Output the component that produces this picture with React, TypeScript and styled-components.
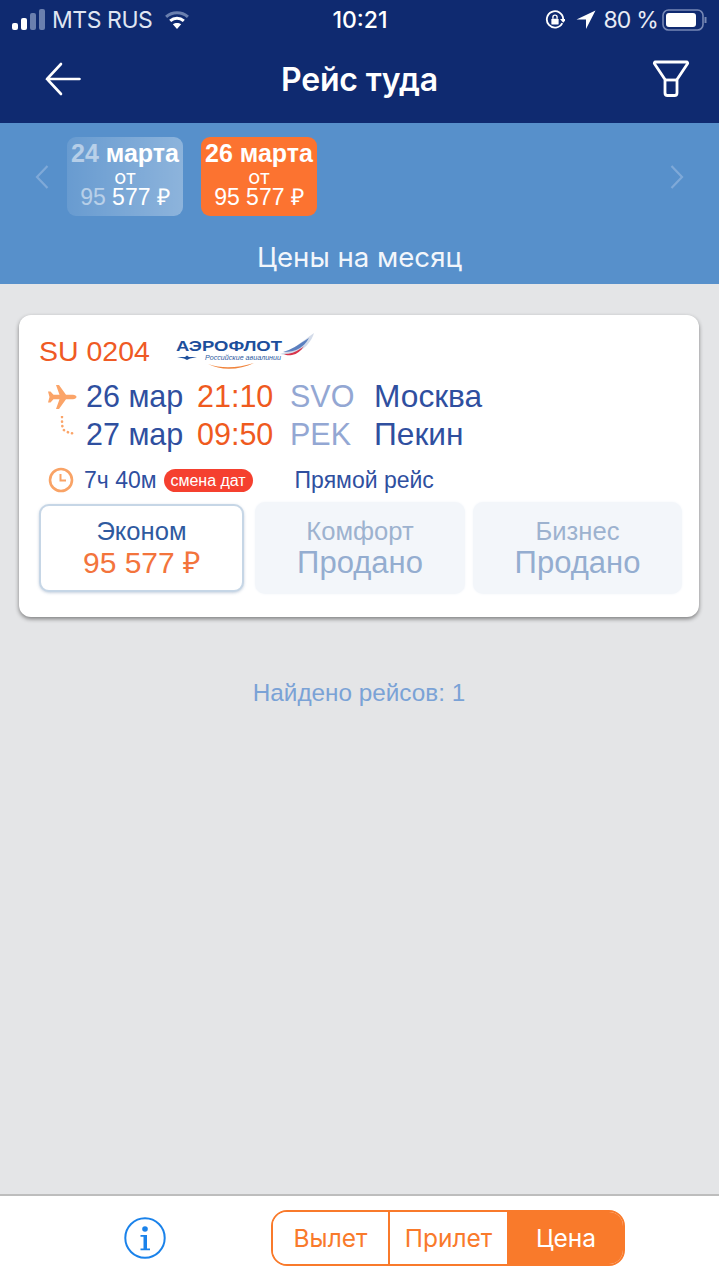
import styled, { createGlobalStyle } from 'styled-components';

const GlobalStyle = createGlobalStyle`
  html, body { margin: 0; padding: 0; background: #e4e5e7; }
  * { box-sizing: border-box; }
  body { font-family: 'Liberation Sans', Arial, sans-serif; }
`;

const Page = styled.div`
  display: flex;
  flex-direction: column;
  width: 719px;
  height: 1280px;
  overflow: hidden;
`;

const TopArea = styled.header`
  height: 123px;
  background: #0f2a70;
  color: #fff;
`;

const StatusBar = styled.div`
  display: grid;
  grid-template-columns: 1fr auto 1fr;
  align-items: center;
  height: 39px;
  padding: 0 11px 0 12px;
  font-family: Inter, sans-serif;
  font-size: 23px;
`;

const StatusLeft = styled.div`
  display: flex;
  align-items: center;
  gap: 6px;
  color: #dfe5f2;
  font-size: 23px;
  letter-spacing: -0.45px;
  & > svg:last-child {
    margin-left: 6px;
  }
`;

const StatusTime = styled.div`
  font-weight: 500;
  font-size: 23px;
`;

const StatusRight = styled.div`
  display: flex;
  justify-content: flex-end;
  align-items: center;
  gap: 7px;
  color: #e8ecf5;
  font-size: 23px;
  letter-spacing: -0.8px;
  & > svg:first-child {
    margin-right: 4px;
  }
  & > span {
    margin-right: -3px;
  }
`;

const NavBar = styled.div`
  display: grid;
  grid-template-columns: 1fr auto 1fr;
  align-items: center;
  height: 84px;
  padding: 0 29px 4px;
  & > svg:first-child {
    margin-left: 16px;
  }
`;

const NavTitle = styled.h1`
  margin: 0;
  font-family: Inter, sans-serif;
  font-weight: 600;
  font-size: 32px;
  letter-spacing: -0.2px;
`;

const NavEnd = styled.div`
  display: flex;
  justify-content: flex-end;
`;

const DateBand = styled.section`
  display: flex;
  flex-direction: column;
  height: 161px;
  padding-top: 14px;
  background: #5790cb;
  color: #fff;
`;

const DateRow = styled.div`
  display: flex;
  align-items: center;
  gap: 18px;
  padding: 0 35px;
`;

const Chevron = styled.svg<{ $end?: boolean }>`
  flex: none;
  margin-left: ${(p) => (p.$end ? 'auto' : '0')};
`;

const DateChip = styled.div<{ $active?: boolean }>`
  display: flex;
  flex-direction: column;
  align-items: center;
  width: 116px;
  height: 79px;
  padding-top: 4px;
  border-radius: 9px;
  background: ${(p) =>
    p.$active
      ? '#fc7330'
      : 'linear-gradient(90deg, rgba(255,255,255,0.1), rgba(255,255,255,0.32))'};
`;

const ChipDate = styled.div`
  font-size: 25px;
  font-weight: 700;
  line-height: 24px;
  white-space: nowrap;
`;

const ChipSmall = styled.div`
  margin-top: 3px;
  font-family: Inter, sans-serif;
  font-size: 20px;
  line-height: 18px;
`;

const ChipPrice = styled.div`
  font-size: 23px;
  line-height: 22px;
  white-space: nowrap;
`;

const Faded = styled.span`
  opacity: 0.5;
`;

const MonthLink = styled.div`
  margin-top: 25px;
  text-align: center;
  font-family: Inter, sans-serif;
  font-size: 27.6px;
  line-height: 32px;
  color: #f2f6fb;
`;

const Content = styled.main`
  flex: 1;
  padding: 31px 20px 0 19px;
  background: #e4e5e7;
`;

const Card = styled.article`
  height: 302px;
  padding: 16px 16px 0 20px;
  border-radius: 12px;
  background: #fff;
  box-shadow: 0 2px 4px rgba(0, 0, 0, 0.45);
`;

const CardHead = styled.div`
  display: flex;
  align-items: center;
  gap: 25px;
  height: 40px;
`;

const FlightNo = styled.div`
  font-size: 28.5px;
  color: #ef5a24;
`;

const Route = styled.div`
  display: grid;
  grid-template-columns: 47px 111px 93px 84px 1fr;
  grid-auto-rows: 37.5px;
  align-items: center;
  margin-top: 7px;
`;

const RouteIcon = styled.div<{ $top?: boolean }>`
  display: flex;
  align-self: ${(p) => (p.$top ? 'start' : 'center')};
  padding-left: 8px;
`;

const DateText = styled.div`
  font-size: 30.5px;
  color: #2f4f9f;
  white-space: nowrap;
`;

const TimeText = styled.div`
  font-size: 30.5px;
  color: #ef5a1e;
`;

const CodeText = styled.div`
  font-size: 30.5px;
  color: #93a7d3;
`;

const CityText = styled.div`
  font-size: 31.7px;
  color: #2f4f9f;
`;

const InfoRow = styled.div`
  display: flex;
  align-items: center;
  height: 30px;
  margin-top: 12px;
  padding-left: 9px;
  font-size: 23px;
  color: #2f4f9f;
`;

const Duration = styled.span`
  margin-left: 10px;
  white-space: nowrap;
`;

const Badge = styled.span`
  margin-left: 7px;
  width: 89px;
  height: 23px;
  border-radius: 12px;
  background: #f5402f;
  color: #fff;
  font-size: 16px;
  line-height: 23px;
  text-align: center;
  white-space: nowrap;
`;

const Direct = styled.span`
  margin-left: 42px;
`;

const Fares = styled.div`
  display: flex;
  align-items: center;
  margin-top: 6.5px;
`;

const Fare = styled.div<{ $selected?: boolean; $w: number; $gap: number }>`
  display: flex;
  flex-direction: column;
  align-items: center;
  justify-content: center;
  width: ${(p) => p.$w}px;
  margin-left: ${(p) => p.$gap}px;
  height: ${(p) => (p.$selected ? '88px' : '92px')};
  padding-bottom: 1px;
  border-radius: 10px;
  border: ${(p) => (p.$selected ? '2px solid #c6d6e6' : 'none')};
  background: ${(p) => (p.$selected ? '#fff' : '#f3f6fa')};
  box-shadow: ${(p) =>
    p.$selected ? '0 1px 3px rgba(90,120,160,0.35)' : '0 0 3px #f3f6fa'};
`;

const FareName = styled.div<{ $selected?: boolean }>`
  font-size: 25.6px;
  line-height: 31px;
  color: ${(p) => (p.$selected ? '#2f5a9f' : '#9db2cf')};
`;

const FarePrice = styled.div<{ $selected?: boolean }>`
  font-size: ${(p) => (p.$selected ? '30px' : '31px')};
  line-height: 32px;
  white-space: nowrap;
  color: ${(p) => (p.$selected ? '#f3743c' : '#94add0')};
`;

const Found = styled.div`
  margin-top: 62px;
  text-align: center;
  font-size: 24.3px;
  line-height: 28px;
  color: #7aa2d6;
`;

const Footer = styled.footer`
  display: flex;
  align-items: center;
  height: 86px;
  padding: 0 0 0 124px;
  background: #fff;
  border-top: 2px solid #bdbdbd;
`;

const Segments = styled.div`
  display: flex;
  width: 354px;
  height: 56px;
  margin-left: 105px;
  border: 2px solid #f97a2b;
  border-radius: 16px;
  overflow: hidden;
`;

const Segment = styled.div<{ $active?: boolean; $w: number }>`
  display: flex;
  align-items: center;
  justify-content: center;
  width: ${(p) => p.$w}px;
  font-family: Inter, sans-serif;
  font-size: 24.5px;
  color: ${(p) => (p.$active ? '#fff' : '#f97a2b')};
  background: ${(p) => (p.$active ? '#f97a2b' : '#fff')};
  & + & {
    border-left: 2px solid #f97a2b;
  }
`;

const LogoBox = styled.svg`
  display: block;
`;

const SignalIcon = () => (
  <svg width="34" height="22" viewBox="0 0 34 22">
    <rect x="0" y="14" width="6" height="7" rx="2" fill="#fff" />
    <rect x="9" y="9" width="6" height="12" rx="2" fill="#fff" />
    <rect x="18" y="4" width="6" height="17" rx="2" fill="#6a7fae" />
    <rect x="27" y="0" width="6" height="21" rx="2" fill="#6a7fae" />
  </svg>
);

const WifiIcon = () => (
  <svg width="26" height="20" viewBox="0 0 28 22" fill="none">
    <path d="M2 7.500C9 1.500 19 1.500 26 7.500" stroke="#6a7fae" strokeWidth="3.400" />
    <path d="M6.500 12C11 8.200 17 8.200 21.500 12" stroke="#fff" strokeWidth="3.400" />
    <path d="M14 21l-4.600-5.200c2.600-2 6.600-2 9.200 0z" fill="#fff" />
  </svg>
);

const RotationLockIcon = () => (
  <svg width="20" height="20" viewBox="0 0 22 22" fill="none">
    <path d="M19 14.500A9 9 0 1 1 20 10" stroke="#fff" strokeWidth="2" />
    <path d="M16.500 10h7l-3.500 4z" fill="#fff" />
    <rect x="7" y="9.500" width="8" height="6.500" rx="1" fill="#fff" />
    <path d="M8.700 9.500V8a2.300 2.300 0 0 1 4.600 0v1.500" stroke="#fff" strokeWidth="1.500" />
  </svg>
);

const LocationIcon = () => (
  <svg width="20" height="20" viewBox="0 0 20 20">
    <path d="M19.500 0.500L0.500 9.500h9.500v9.500z" fill="#fff" />
  </svg>
);

const BatteryIcon = () => (
  <svg width="46" height="22" viewBox="0 0 46 22" fill="none">
    <rect x="1" y="1" width="40" height="20" rx="5.500" stroke="#7788b5" strokeWidth="1.600" />
    <rect x="4" y="4" width="30" height="14" rx="3" fill="#fff" />
    <path d="M43.500 8v6" stroke="#7788b5" strokeWidth="2" />
  </svg>
);

const BackIcon = () => (
  <svg width="36" height="34" viewBox="0 0 36 34" fill="none" stroke="#fff" strokeWidth="2.600" strokeLinecap="round">
    <path d="M34.500 17H2M16 2L2 17l14 15" />
  </svg>
);

const FilterIcon = () => (
  <svg width="38" height="38" viewBox="0 0 38 38" fill="none" stroke="#fff" strokeWidth="2.800" strokeLinejoin="round">
    <path d="M3.500 2h31c1 0 1.500 1 1 1.800L25 19.500V33c0 1.500-1 2.500-2.500 2.500h-7C14 35.500 13 34.500 13 33V19.500L2.500 3.800C2 3 2.500 2 3.500 2z" />
    <path d="M13 20h12" />
  </svg>
);

const PlaneIcon = () => (
  <svg width="30" height="26" viewBox="0 0 30 26">
    <path
      d="M29.500 13c0-1.200-1.700-2.200-3.500-2.200h-7L12 1H9l3.500 9.800H6.500L3.500 7.500H1L2.500 13 1 18.500h2.500l3-3.300h6L9 25h3l7-9.800h7c1.800 0 3.500-1 3.500-2.200z"
      fill="#fba468"
    />
  </svg>
);

const DottedPathIcon = () => (
  <svg width="30" height="28" viewBox="0 0 30 28" fill="none">
    <path
      d="M15 1c0 5 0 9 1 12 2 3 7 4 13 5"
      stroke="#fba468"
      strokeWidth="2.600"
      strokeLinecap="round"
      strokeDasharray="0.100 4.400"
    />
  </svg>
);

const ClockIcon = () => (
  <svg width="26" height="26" viewBox="0 0 26 26" fill="none" stroke="#f9a366" strokeWidth="2.600">
    <circle cx="13" cy="13" r="11" />
    <path d="M12.500 7v6.500H18" strokeWidth="2" />
  </svg>
);

const InfoIcon = () => (
  <svg width="42" height="42" viewBox="0 0 42 42" fill="none">
    <circle cx="21" cy="21" r="19.700" stroke="#1a82ea" strokeWidth="2" />
    <circle cx="21" cy="12" r="2.800" fill="#1a82ea" />
    <path d="M16.500 18h6.500v13.500h3v1.800H16.500v-1.800h3V19.800h-3z" fill="#1a82ea" />
  </svg>
);

const AeroflotLogo = () => (
  <LogoBox width="140" height="40" viewBox="0 0 140 40">
    <text
      x="1"
      y="20"
      fontFamily="'Liberation Sans', sans-serif"
      fontWeight="700"
      fontSize="15.500"
      fill="#1d4f9c"
      textLength="106"
      lengthAdjust="spacingAndGlyphs"
    >
      АЭРОФЛОТ
    </text>
    <path d="M105 23C116 20 128 10 139 2c-2 8-10 18-22 21-4 1-9 1-12 0z" fill="#d3dbe9" />
    <path d="M108 21c8-2 15-7 26-14-3 5-6 8-9 10-5 3-11 4-17 4z" fill="#5b7fbf" />
    <path d="M109 23c6 0 12-2 16-5 2-1 3-2 4-3-3 5-7 8-12 9-3 .5-6 .5-8-1z" fill="#d8344a" />
    <path d="M2 26h8l2-1.500 2 1.500h8l-7 1.500-3 1.500-3-1.500z" fill="#1d4f9c" />
    <text
      x="30"
      y="29"
      fontFamily="'Liberation Sans', sans-serif"
      fontStyle="italic"
      fontSize="7.500"
      fill="#2d5aa0"
      textLength="76"
      lengthAdjust="spacingAndGlyphs"
    >
      Российские авиалинии
    </text>
    <path d="M33 33c14 5 30 4 46-1-14 7-33 8-46 1z" fill="#f0843c" />
  </LogoBox>
);

const ChevronLeft = () => (
  <Chevron width="14" height="24" viewBox="0 0 14 24" fill="none" stroke="#7fa9d8" strokeWidth="2.200">
    <path d="M12.500 1L2 12l10.500 11" />
  </Chevron>
);

const ChevronRight = () => (
  <Chevron $end width="14" height="24" viewBox="0 0 14 24" fill="none" stroke="#7fa9d8" strokeWidth="2.200">
    <path d="M1.500 1L12 12 1.500 23" />
  </Chevron>
);

const fares = [
  { name: 'Эконом', price: '95 577 ₽', selected: true, w: 205, gap: 0 },
  { name: 'Комфорт', price: 'Продано', selected: false, w: 210, gap: 11 },
  { name: 'Бизнес', price: 'Продано', selected: false, w: 209, gap: 8 },
];

const sorts = [
  { title: 'Вылет', w: 115, active: false },
  { title: 'Прилет', w: 119, active: false },
  { title: 'Цена', w: 116, active: true },
];

const App = () => {
  return (
    <Page>
      <GlobalStyle />
      <TopArea>
        <StatusBar>
          <StatusLeft>
            <SignalIcon />
            <span>MTS RUS</span>
            <WifiIcon />
          </StatusLeft>
          <StatusTime>10:21</StatusTime>
          <StatusRight>
            <RotationLockIcon />
            <LocationIcon />
            <span>80 %</span>
            <BatteryIcon />
          </StatusRight>
        </StatusBar>
        <NavBar>
          <BackIcon />
          <NavTitle>Рейс туда</NavTitle>
          <NavEnd>
            <FilterIcon />
          </NavEnd>
        </NavBar>
      </TopArea>
      <DateBand>
        <DateRow>
          <ChevronLeft />
          <DateChip>
            <ChipDate>
              <Faded>24</Faded> марта
            </ChipDate>
            <ChipSmall>от</ChipSmall>
            <ChipPrice>
              <Faded>95</Faded> 577 ₽
            </ChipPrice>
          </DateChip>
          <DateChip $active>
            <ChipDate>26 марта</ChipDate>
            <ChipSmall>от</ChipSmall>
            <ChipPrice>95 577 ₽</ChipPrice>
          </DateChip>
          <ChevronRight />
        </DateRow>
        <MonthLink>Цены на месяц</MonthLink>
      </DateBand>
      <Content>
        <Card>
          <CardHead>
            <FlightNo>SU 0204</FlightNo>
            <AeroflotLogo />
          </CardHead>
          <Route>
            <RouteIcon>
              <PlaneIcon />
            </RouteIcon>
            <DateText>26 мар</DateText>
            <TimeText>21:10</TimeText>
            <CodeText>SVO</CodeText>
            <CityText>Москва</CityText>
            <RouteIcon $top>
              <DottedPathIcon />
            </RouteIcon>
            <DateText>27 мар</DateText>
            <TimeText>09:50</TimeText>
            <CodeText>PEK</CodeText>
            <CityText>Пекин</CityText>
          </Route>
          <InfoRow>
            <ClockIcon />
            <Duration>7ч 40м</Duration>
            <Badge>смена дат</Badge>
            <Direct>Прямой рейс</Direct>
          </InfoRow>
          <Fares>
            {fares.map((fare) => (
              <Fare key={fare.name} $selected={fare.selected} $w={fare.w} $gap={fare.gap}>
                <FareName $selected={fare.selected}>{fare.name}</FareName>
                <FarePrice $selected={fare.selected}>{fare.price}</FarePrice>
              </Fare>
            ))}
          </Fares>
        </Card>
        <Found>Найдено рейсов: 1</Found>
      </Content>
      <Footer>
        <InfoIcon />
        <Segments>
          {sorts.map((item) => (
            <Segment key={item.title} $active={item.active} $w={item.w}>
              {item.title}
            </Segment>
          ))}
        </Segments>
      </Footer>
    </Page>
  );
};

export default App;
